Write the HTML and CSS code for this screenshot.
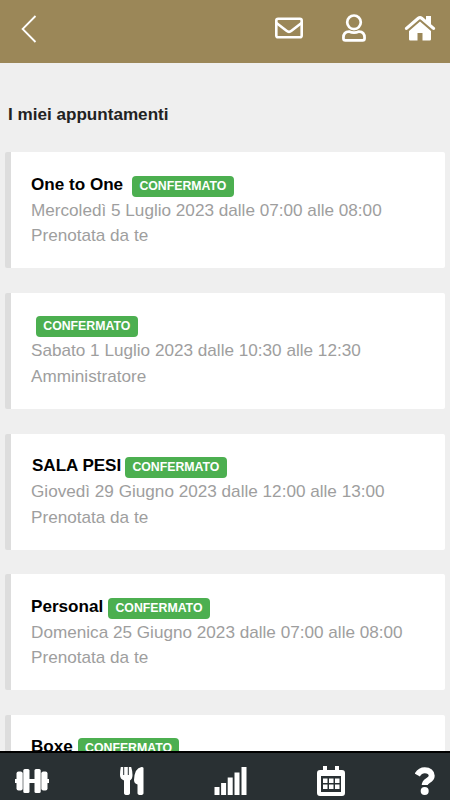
FILE: index.html
```html
<!DOCTYPE html>
<html lang="it">
<head>
<meta charset="utf-8">
<title>I miei appuntamenti</title>
<link rel="stylesheet" href="styles.css">
</head>
<body>
<div class="app">
  <header class="topbar">
    <svg class="back" viewBox="0 0 16 28"><path d="M14.5 1 1.6 14l12.9 13"/></svg>
    <nav class="actions">
      <svg class="mail" viewBox="0 0 28 22"><rect x="1.3" y="1.8" width="25.4" height="18.4" rx="1.8"/><path d="M1.5 6 11.5 13.8Q14 15.8 16.500 13.8L26.5 6"/></svg>
      <svg class="user" viewBox="0 0 26 28"><circle cx="13" cy="8.3" r="6.8"/><path d="M8 17.600q5 2.200 10 0c4.300 0 5.600 3 5.600 6.300 0 1.800-.5 2.500-2 2.500H4.400c-1.500 0-2-.7-2-2.500 0-3.300 1.300-6.300 5.600-6.300Z"/></svg>
      <svg class="home" viewBox="0 0 32 26"><path class="roof" d="M2.500 13.400 14.300 3.300q1.700-1.400 3.400 0L29.500 13.400"/><path d="M22 1h5v9l-5-4.300ZM16 6.600 27 16v8.200q0 1.300-1.300 1.300H18.500v-7.500h-5v7.500H6.300Q5 25.500 5 24.200V16Z"/></svg>
    </nav>
  </header>
  <main class="content">
    <h1>I miei appuntamenti</h1>
    <article class="card">
      <h2><span class="name one">One to One</span><span class="badge">CONFERMATO</span></h2>
      <p>Mercoledì 5 Luglio 2023 dalle 07:00 alle 08:00</p>
      <p>Prenotata da te</p>
    </article>
    <article class="card">
      <h2><span class="name"></span><span class="badge">CONFERMATO</span></h2>
      <p>Sabato 1 Luglio 2023 dalle 10:30 alle 12:30</p>
      <p>Amministratore</p>
    </article>
    <article class="card">
      <h2><span class="name sala">SALA PESI</span><span class="badge">CONFERMATO</span></h2>
      <p>Giovedì 29 Giugno 2023 dalle 12:00 alle 13:00</p>
      <p>Prenotata da te</p>
    </article>
    <article class="card">
      <h2><span class="name">Personal</span><span class="badge">CONFERMATO</span></h2>
      <p>Domenica 25 Giugno 2023 dalle 07:00 alle 08:00</p>
      <p>Prenotata da te</p>
    </article>
    <article class="card">
      <h2><span class="name">Boxe</span><span class="badge">CONFERMATO</span></h2>
    </article>
  </main>
  <footer class="tabbar">
    <svg class="dumbbell" viewBox="0 0 36 26"><path d="M1 11h5v4H1ZM14 11h8v4h-8ZM30 11h5v4h-5Z"/><rect x="2.5" y="3.500" width="6.200" height="19" rx="2"/><rect x="9.300" y="1" width="6.200" height="24" rx="1.5"/><rect x="20.500" y="1" width="6.200" height="24" rx="1.5"/><rect x="27.300" y="3.500" width="6.200" height="19" rx="2"/></svg>
    <svg class="food" viewBox="0 0 24 28"><path d="M.8 0h2.400v8h1V0h3.600v8h1V0h2.400Q12.500 4 12.500 8q0 4-2.500 5.500V26q0 2-3 2t-3-2V13.500Q0 12 0 8 0 4 .8 0ZM23.500 1v25q0 2-3 2t-3-2V17.500q-3.500-1-3.500-4.500Q14.500 1 21.500 0q2 0 2 1Z"/></svg>
    <svg class="signal" viewBox="0 0 32 28"><path d="M0 20h5v8H0ZM6.600 16h5v12h-5ZM13.200 10.500h5V28h-5ZM20 5.500h5V28h-5ZM27 0h5v28h-5Z"/></svg>
    <svg class="calendar" viewBox="0 0 28 30"><path fill-rule="evenodd" d="M6 0h4v4h8V0h4v4h3q3 0 3 3v20q0 3-3 3H3q-3 0-3-3V7q0-3 3-3h3ZM4 10v16h20V10Z"/><path d="M6 12.500h4.500v4.500H6ZM12 12.500h4.500v4.500H12ZM18 12.500h4.500v4.500H18ZM6 18.500h4.500V23H6ZM12 18.500h4.500V23H12ZM18 18.500h4.500V23H18Z"/></svg>
    <svg class="help" viewBox="0 0 20 28"><path d="M2.300 8Q5 3.200 9.800 3.200c4.400 0 6.900 2.200 6.900 5.500 0 5-7 4.500-7 9.300"/><circle cx="9.700" cy="24" r="4"/></svg>
  </footer>
</div>
</body>
</html>
```

FILE: styles.css
```css
* { box-sizing: border-box; }
body {
  margin: 0;
  font-family: "Liberation Sans", Arial, sans-serif;
  background: #efefef;
}
.app {
  display: flex;
  flex-direction: column;
  height: 800px;
  overflow: hidden;
}
.topbar {
  flex: none;
  display: flex;
  justify-content: space-between;
  height: 63px;
  padding: 14px 14px 0 21px;
  background: #9b8758;
}
svg { display: block; flex: none; fill: #fff; }
.back { width: 16px; height: 28px; margin-top: 1px; fill: none; stroke: #fff; stroke-width: 1.8; }
.actions { display: flex; }
.mail { width: 28px; height: 22px; margin: 3px 38px 0 0; fill: none; stroke: #fff; stroke-width: 2.6; }
.user { width: 26px; height: 28px; margin-right: 37px; fill: none; stroke: #fff; stroke-width: 2.7; }
.home { width: 32px; height: 26px; margin-top: 1px; }
.roof { fill: none; stroke: #fff; stroke-width: 3.2; stroke-linecap: round; }
.content {
  flex: 1;
  min-height: 0;
  overflow: hidden;
  padding: 38.5px 5px 0;
}
h1 {
  margin: 0 0 24.7px 3px;
  font-size: 17.1px;
  line-height: 26px;
  color: #222;
}
.card {
  height: 116px;
  margin-bottom: 24.7px;
  padding: 19.5px 0 0 20px;
  background: #fff;
  border-left: 6px solid #ddd;
  border-radius: 2px;
}
h2 {
  display: flex;
  margin: 0;
  height: 26px;
  font-size: 17.1px;
  line-height: 26px;
  color: #000;
}
.name { margin-right: 5px; }
.one { margin-right: 9px; }
.sala { padding-left: 1px; margin-right: 4px; letter-spacing: -0.05px; }
.badge {
  width: 101.5px;
  height: 21px;
  margin-top: 4px;
  border-radius: 4px;
  background: #4caf50;
  color: #fff;
  font-size: 12.3px;
  line-height: 21px;
  text-align: center;
}
p {
  margin: 0;
  font-size: 17.15px;
  line-height: 25.7px;
  color: #9e9e9e;
}
.tabbar {
  flex: none;
  display: flex;
  justify-content: space-between;
  align-items: center;
  height: 49px;
  padding: 9px 15px 0 14px;
  border-top: 2px solid #000;
  background: #293033;
}
.dumbbell { width: 36px; height: 26px; }
.food { width: 24px; height: 28px; }
.signal { width: 33px; height: 28px; }
.calendar { width: 28px; height: 30px; }
.help { width: 20px; height: 28px; }
.help path { fill: none; stroke: #fff; stroke-width: 6; }
```
